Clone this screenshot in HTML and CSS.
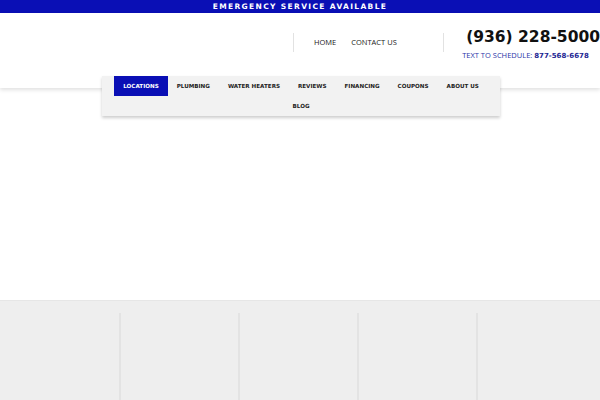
FILE: index.html
```html
<!DOCTYPE html>
<html>
<head>
<meta charset="utf-8">
<link rel="stylesheet" href="styles.css">
</head>
<body>
<div class="topbar">EMERGENCY SERVICE AVAILABLE</div>
<header class="header">
  <div class="header-right">
    <span class="divider"></span>
    <nav class="util-nav">
      <a>HOME</a>
      <a>CONTACT US</a>
    </nav>
    <span class="divider"></span>
    <div class="phone-block">
      <div class="phone">(936) 228-5000</div>
      <div class="text-sched">TEXT TO SCHEDULE: <b>877-568-6678</b></div>
    </div>
  </div>
</header>
<div class="nav-wrap">
  <nav class="main-nav">
    <a class="active">LOCATIONS</a>
    <a>PLUMBING</a>
    <a>WATER HEATERS</a>
    <a>REVIEWS</a>
    <a>FINANCING</a>
    <a>COUPONS</a>
    <a>ABOUT US</a>
    <a>BLOG</a>
  </nav>
</div>
<div class="hero"></div>
<section class="footer-cols">
  <div class="col"></div>
  <div class="col"></div>
  <div class="col"></div>
  <div class="col"></div>
  <div class="col"></div>
</section>
</body>
</html>
```
FILE: styles.css
```css
* { box-sizing: border-box; }
html, body { margin: 0; padding: 0; }
body {
  width: 600px;
  height: 400px;
  overflow: hidden;
  background: #ffffff;
  font-family: "DejaVu Sans", Verdana, sans-serif;
}
.topbar {
  height: 13px;
  background: #0a0fb5;
  color: #ffffff;
  font-size: 7.5px;
  font-weight: bold;
  letter-spacing: 1.35px;
  text-align: center;
  line-height: 13px;
}
.header {
  height: 75px;
  background: #ffffff;
  box-shadow: 0 2px 4px rgba(0,0,0,0.12);
  position: relative;
  z-index: 1;
}
.header-right {
  display: flex;
  align-items: flex-start;
  padding-left: 293px;
  padding-top: 19px;
}
.divider {
  width: 1px;
  height: 19px;
  background: #e2e2e2;
  margin-top: 1px;
}
.util-nav {
  display: flex;
  gap: 15px;
  padding: 5px 0 0 20px;
  width: 150px;
  font-family: "Open Sans", "DejaVu Sans", sans-serif;
  font-size: 7.5px;
  color: #222222;
}
.phone-block {
  padding-left: 18px;
  white-space: nowrap;
}
.phone {
  font-size: 15.5px;
  font-weight: bold;
  color: #111111;
  line-height: 17px;
  margin-top: -3px;
  margin-left: 4px;
}
.text-sched {
  font-family: "Open Sans", "DejaVu Sans", sans-serif;
  font-size: 7.5px;
  color: #2b35a8;
  margin-top: 4px;
}
.text-sched b {
  font-family: "DejaVu Sans", sans-serif;
  color: #1c2592;
  font-size: 7px;
}
.nav-wrap {
  display: flex;
  justify-content: center;
  margin-top: -12px;
  position: relative;
  z-index: 2;
}
.main-nav {
  width: 398px;
  margin-left: 2px;
  background: #f2f2f2;
  box-shadow: 0 2px 3px rgba(0,0,0,0.2);
  display: flex;
  flex-wrap: wrap;
  justify-content: center;
  padding: 0 10px;
}
.main-nav a {
  height: 20px;
  line-height: 20px;
  padding: 0 9px;
  font-size: 5.6px;
  font-weight: bold;
  color: #222222;
}
.main-nav a.active {
  background: #0a0fb5;
  color: #ffffff;
}
.hero {
  height: 184px;
}
.footer-cols {
  height: 100px;
  background: #eeeeee;
  border-top: 1px solid #e6e6e6;
  display: grid;
  grid-template-columns: 119px 119px 119px 119px 1fr;
  padding-top: 12px;
}
.col + .col {
  border-left: 2px solid #e3e3e3;
}
```
